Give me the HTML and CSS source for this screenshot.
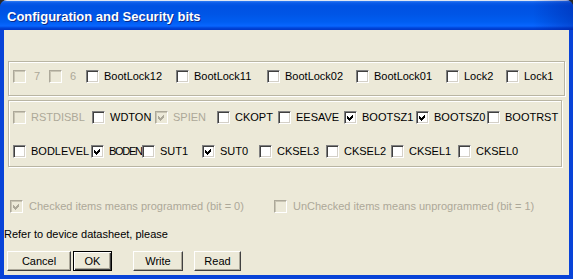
FILE: index.html
```html
<!DOCTYPE html>
<html lang="en">
<head>
    <meta charset="UTF-8">
    <title>Configuration and Security bits</title>
    <link rel="stylesheet" href="styles.css">
</head>
<body>

    <div class="window">

        <!-- Title bar -->
        <div class="titlebar">
            <span class="title">Configuration and Security bits</span>
        </div>

        <div class="client">

            <!-- Lock bits -->
            <div class="group group-lock">
                <div class="row row-lock">
                    <label class="check disabled"><span class="box"></span><span class="text num">7</span></label>
                    <label class="check disabled"><span class="box"></span><span class="text num">6</span></label>
                    <label class="check"><span class="box"></span><span class="text">BootLock12</span></label>
                    <label class="check"><span class="box"></span><span class="text">BootLock11</span></label>
                    <label class="check"><span class="box"></span><span class="text">BootLock02</span></label>
                    <label class="check"><span class="box"></span><span class="text">BootLock01</span></label>
                    <label class="check"><span class="box"></span><span class="text">Lock2</span></label>
                    <label class="check"><span class="box"></span><span class="text">Lock1</span></label>
                </div>
            </div>

            <!-- Fuse bits -->
            <div class="group group-fuse">
                <div class="row row-high">
                    <label class="check disabled"><span class="box"></span><span class="text">RSTDISBL</span></label>
                    <label class="check"><span class="box"></span><span class="text">WDTON</span></label>
                    <label class="check disabled"><span class="box"><svg width="11" height="11" viewBox="0 0 11 11"><path d="M2 4 L4 6 L8 2 L8 5 L4 9 L2 7 Z" shape-rendering="crispEdges"/></svg></span><span class="text">SPIEN</span></label>
                    <label class="check"><span class="box"></span><span class="text">CKOPT</span></label>
                    <label class="check"><span class="box"></span><span class="text">EESAVE</span></label>
                    <label class="check"><span class="box"><svg width="11" height="11" viewBox="0 0 11 11"><path d="M2 4 L4 6 L8 2 L8 5 L4 9 L2 7 Z" shape-rendering="crispEdges"/></svg></span><span class="text">BOOTSZ1</span></label>
                    <label class="check"><span class="box"><svg width="11" height="11" viewBox="0 0 11 11"><path d="M2 4 L4 6 L8 2 L8 5 L4 9 L2 7 Z" shape-rendering="crispEdges"/></svg></span><span class="text">BOOTSZ0</span></label>
                    <label class="check"><span class="box"></span><span class="text">BOOTRST</span></label>
                </div>
                <div class="row row-low">
                    <label class="check"><span class="box"></span><span class="text">BODLEVEL</span></label>
                    <label class="check"><span class="box"><svg width="11" height="11" viewBox="0 0 11 11"><path d="M2 4 L4 6 L8 2 L8 5 L4 9 L2 7 Z" shape-rendering="crispEdges"/></svg></span><span class="text narrow">BODEN</span></label>
                    <label class="check"><span class="box"></span><span class="text">SUT1</span></label>
                    <label class="check"><span class="box"><svg width="11" height="11" viewBox="0 0 11 11"><path d="M2 4 L4 6 L8 2 L8 5 L4 9 L2 7 Z" shape-rendering="crispEdges"/></svg></span><span class="text">SUT0</span></label>
                    <label class="check"><span class="box"></span><span class="text">CKSEL3</span></label>
                    <label class="check"><span class="box"></span><span class="text">CKSEL2</span></label>
                    <label class="check"><span class="box"></span><span class="text">CKSEL1</span></label>
                    <label class="check"><span class="box"></span><span class="text">CKSEL0</span></label>
                </div>
            </div>

            <!-- Legend -->
            <div class="legend">
                <label class="check disabled"><span class="box"><svg width="11" height="11" viewBox="0 0 11 11"><path d="M2 4 L4 6 L8 2 L8 5 L4 9 L2 7 Z" shape-rendering="crispEdges"/></svg></span><span class="text wide">Checked items means programmed (bit = 0)</span></label>
                <label class="check disabled"><span class="box"></span><span class="text wide">UnChecked items means unprogrammed (bit = 1)</span></label>
            </div>

            <p class="note">Refer to device datasheet, please</p>

            <!-- Buttons -->
            <div class="buttons">
                <button class="btn btn-cancel">Cancel</button>
                <button class="btn btn-ok">OK</button>
                <button class="btn btn-write">Write</button>
                <button class="btn btn-read">Read</button>
            </div>

        </div>
    </div>

</body>
</html>
```

FILE: styles.css
```css
* {
    margin: 0;
    padding: 0;
    box-sizing: border-box;
}

body {
    font-family: 'Liberation Sans', Arial, sans-serif;
    font-size: 11px;
    background-color: #2a2a2a;
    color: #000000;
}

/* Window frame */
.window {
    width: 573px;
    height: 279px;
    display: flex;
    flex-direction: column;
    background-color: #0843d8;
    border-radius: 7px 7px 0 0;
    overflow: hidden;
}

.titlebar {
    height: 30px;
    flex: none;
    padding: 4px 7px 0;
    background:
        linear-gradient(to right, rgba(0, 20, 140, 0) 93%, rgba(0, 20, 140, 0.35) 100%),
        linear-gradient(#dfe6f2 0, #dfe6f2 1px, #2f7cf3 1px, #0a5ae8 3px, #0052e2 6px, #0055e6 14px, #005ef2 22px, #0866ff 26px, #0045d8 28px, #0036c8 30px);
}

.title {
    color: #ffffff;
    font-weight: bold;
    font-size: 13px;
    line-height: 26px;
    text-shadow: 1px 1px #0a2a8a;
}

.client {
    flex: 1;
    margin: 0 4px 4px;
    padding-top: 31px;
    background-color: #ece9d8;
    display: flex;
    flex-direction: column;
}

/* Group boxes */
.group {
    border: 1px solid #b9b5a3;
    box-shadow: inset 1px 1px #ffffff, 1px 1px #ffffff;
    margin-left: 4px;
}

.group-lock {
    margin-right: 4px;
    padding: 8px 0 12px 4px;
}

.group-fuse {
    margin-top: 4px;
    margin-right: 7px;
    padding: 10px 0 8px 4px;
}

.row {
    display: grid;
    align-items: center;
    height: 13px;
}

.row-lock {
    grid-template-columns: 36px 37px 90px 91px 89px 90px 60px auto;
}

.row-high {
    grid-template-columns: 79px 63px 62px 61px 66px 72px 71px auto;
}

.row-low {
    margin-top: 21px;
    grid-template-columns: 78px 51px 60px 57px 67px 65px 67px auto;
}

/* Check boxes */
.check {
    display: flex;
    align-items: center;
    white-space: nowrap;
}

.box {
    width: 13px;
    height: 13px;
    flex: none;
    border: 1px solid;
    border-color: #808080 #ffffff #ffffff #808080;
    box-shadow: inset 1px 1px #404040, inset -1px -1px #d4d0c8;
    background-color: #ffffff;
    color: #000000;
}

.box svg {
    display: block;
    fill: currentColor;
}

.text {
    margin-left: 5px;
    line-height: 13px;
}

.text.num {
    margin-left: 8px;
}

.text.narrow {
    letter-spacing: -1.3px;
}

.disabled .box {
    background-color: #ece9d8;
    border-color: #aca899 #ffffff #ffffff #aca899;
    box-shadow: inset 1px 1px #c9c5b4;
    color: #aca899;
}

.disabled .text {
    color: #aca899;
}

/* Legend line */
.legend {
    margin-top: 33px;
    padding-left: 6px;
    display: grid;
    grid-template-columns: 264px auto;
    align-items: center;
}

.text.wide {
    margin-left: 6px;
}

.note {
    margin-top: 15px;
    line-height: 13px;
}

/* Buttons */
.buttons {
    margin-top: 10px;
    padding-left: 3px;
    display: flex;
}

.btn {
    height: 20px;
    font-family: 'Liberation Sans', Arial, sans-serif;
    font-size: 11px;
    color: #000000;
    background-color: #ece9d8;
    border: 1px solid;
    border-color: #ffffff #404040 #404040 #ffffff;
    box-shadow: inset -1px -1px #aca899;
}

.btn-cancel {
    width: 64px;
}

.btn-ok {
    width: 39px;
    margin-left: 2px;
    border-color: #000000;
    box-shadow: inset 1px 1px #ffffff, inset -1px -1px #404040, inset -2px -2px #aca899;
}

.btn-write {
    width: 50px;
    margin-left: 21px;
}

.btn-read {
    width: 47px;
    margin-left: 11px;
}
```
